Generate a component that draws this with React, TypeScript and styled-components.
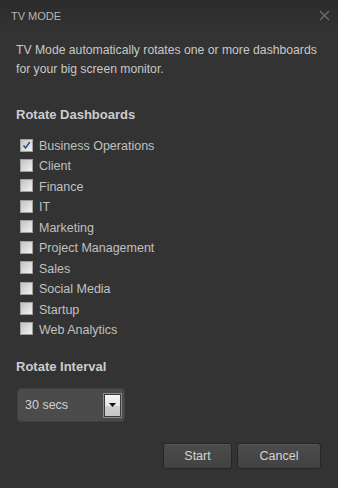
import React, { useState } from "react";
import styled, { createGlobalStyle } from "styled-components";

const Global = createGlobalStyle`
  html, body { margin: 0; padding: 0; background: #333333; }
  body { font-family: "Liberation Sans", Arial, sans-serif; }
`;

const Dialog = styled.div`
  width: 338px;
  height: 488px;
  background: #333333;
  display: flex;
  flex-direction: column;
  color: #c4c4c4;
  overflow: hidden;
`;

const Header = styled.div`
  height: 32px;
  flex: none;
  display: flex;
  align-items: center;
  justify-content: space-between;
  padding: 0 7px 0 11px;
  background: linear-gradient(#2b2b2b, #333333);
`;

const Title = styled.div`
  font-size: 11px;
  line-height: 32px;
  color: #b4b4b4;
`;

const Close = styled.button`
  width: 14px;
  height: 14px;
  padding: 0;
  border: 0;
  background: none;
  display: flex;
  align-items: center;
  justify-content: center;
  margin-top: -2px;
`;

const Body = styled.div`
  padding: 9px 17px 0 16px;
  display: flex;
  flex-direction: column;
`;

const Desc = styled.p`
  margin: 0;
  font-size: 12.2px;
  line-height: 19px;
  white-space: nowrap;
  color: #c8c8c8;
`;

const Heading = styled.h3<{ $top: number }>`
  margin: ${(p) => p.$top}px 0 0;
  font-size: 13px;
  font-weight: bold;
  line-height: 16px;
  color: #cccccc;
`;

const List = styled.div`
  margin-top: 13px;
  display: flex;
  flex-direction: column;
  padding-left: 4px;
`;

const Row = styled.label`
  height: 20.44px;
  display: flex;
  align-items: flex-start;
  gap: 6px;
  font-size: 12.5px;
  line-height: 20.44px;
  color: #c0c0c0;
`;

const Box = styled.span`
  width: 11px;
  height: 11px;
  margin-top: 2.5px;
  border: 1px solid #a0a0a0;
  background: linear-gradient(135deg, #c2c2c2, #f2f2f2);
  display: flex;
  align-items: center;
  justify-content: center;
  flex: none;
`;

const Select = styled.div`
  margin-top: 13px;
  margin-left: 1px;
  width: 108px;
  height: 34px;
  box-sizing: border-box;
  border-radius: 4px;
  background: #4b4b4b;
  border: 1px solid #404040;
  display: flex;
  align-items: center;
  justify-content: space-between;
  padding: 0 3px 0 7px;
  font-size: 12.5px;
  color: #d0d0d0;
`;

const Arrow = styled.span`
  width: 15px;
  height: 21px;
  border: 1px solid #3a3a3a;
  outline: 1px solid #8a8a8a;
  background: linear-gradient(#f4f4f4 0%, #e6e6e6 50%, #cfcfcf 51%, #c6c6c6 100%);
  display: flex;
  align-items: center;
  justify-content: center;
`;

const Footer = styled.div`
  margin-top: 21px;
  display: flex;
  justify-content: flex-end;
  gap: 5px;
`;

const Button = styled.button<{ $w: number }>`
  width: ${(p) => p.$w}px;
  height: 26px;
  box-sizing: border-box;
  border: 1px solid #262626;
  border-radius: 3px;
  background: linear-gradient(#4c4c4c, #424242);
  box-shadow: inset 0 1px 0 #555555;
  color: #d4d4d4;
  font-family: "Liberation Sans", Arial, sans-serif;
  font-size: 12.5px;
  line-height: 24px;
  padding: 0;
`;

const dashboards = [
  "Business Operations",
  "Client",
  "Finance",
  "IT",
  "Marketing",
  "Project Management",
  "Sales",
  "Social Media",
  "Startup",
  "Web Analytics",
];

export default function App() {
  const [checked, setChecked] = useState<Record<string, boolean>>({
    "Business Operations": true,
  });
  return (
    <>
      <Global />
      <Dialog>
        <Header>
          <Title>TV MODE</Title>
          <Close aria-label="Close">
            <svg width="11" height="11" viewBox="0 0 11 11">
              <path d="M1 1L10 10M10 1L1 10" stroke="#6f6f6f" strokeWidth="1.2" />
            </svg>
          </Close>
        </Header>
        <Body>
          <Desc>
            TV Mode automatically rotates one or more dashboards
            <br />
            for your big screen monitor.
          </Desc>
          <Heading $top={28}>Rotate Dashboards</Heading>
          <List>
            {dashboards.map((d) => (
              <Row
                key={d}
                onClick={() => setChecked((c) => ({ ...c, [d]: !c[d] }))}
              >
                <Box>
                  {checked[d] && (
                    <svg width="9" height="9" viewBox="0 0 9 9">
                      <path
                        d="M1.5 4.5L3.5 7L7.8 1"
                        fill="none"
                        stroke="#2f4f9f"
                        strokeWidth="1.6"
                      />
                    </svg>
                  )}
                </Box>
                {d}
              </Row>
            ))}
          </List>
          <Heading $top={19}>Rotate Interval</Heading>
          <Select>
            30 secs
            <Arrow>
              <svg width="7" height="4" viewBox="0 0 7 4">
                <path d="M0 0H7L3.5 4Z" fill="#111" />
              </svg>
            </Arrow>
          </Select>
          <Footer>
            <Button $w={69}>Start</Button>
            <Button $w={84}>Cancel</Button>
          </Footer>
        </Body>
      </Dialog>
    </>
  );
}
